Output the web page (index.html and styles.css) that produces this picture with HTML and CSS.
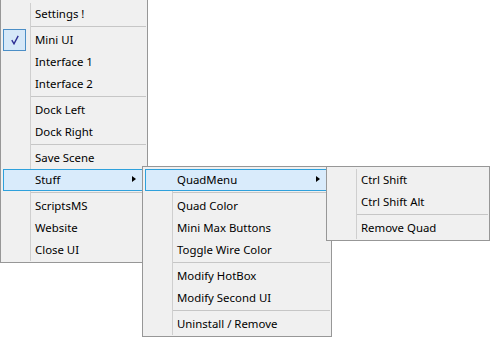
FILE: index.html
```html
<!DOCTYPE html>
<html lang="en">
<head>
    <meta charset="UTF-8">
    <title>Context Menu</title>
    <link rel="stylesheet" href="styles.css">
</head>
<body>
    <div class="menu main">
        <div class="item">Settings !</div>
        <div class="sep"></div>
        <div class="item">
            <span class="check">
                <svg width="8" height="10" viewBox="0 0 8 10"><path d="M0.8 5.2 L3 8.8 L7.2 0.8" fill="none" stroke="#2e2e94" stroke-width="1.4"/></svg>
            </span>Mini UI
        </div>
        <div class="item">Interface 1</div>
        <div class="item">Interface 2</div>
        <div class="sep"></div>
        <div class="item">Dock Left</div>
        <div class="item">Dock Right</div>
        <div class="sep"></div>
        <div class="item">Save Scene</div>
        <div class="item open">Stuff<span class="arrow"></span>
            <div class="menu sub stuff">
                <div class="item open">QuadMenu<span class="arrow"></span>
                    <div class="menu sub quad">
                        <div class="item">Ctrl Shift</div>
                        <div class="item">Ctrl Shift Alt</div>
                        <div class="sep"></div>
                        <div class="item">Remove Quad</div>
                    </div>
                </div>
                <div class="sep"></div>
                <div class="item">Quad Color</div>
                <div class="item">Mini Max Buttons</div>
                <div class="item">Toggle Wire Color</div>
                <div class="sep"></div>
                <div class="item">Modify HotBox</div>
                <div class="item">Modify Second UI</div>
                <div class="sep"></div>
                <div class="item">Uninstall / Remove</div>
            </div>
        </div>
        <div class="sep"></div>
        <div class="item">ScriptsMS</div>
        <div class="item">Website</div>
        <div class="item">Close UI</div>
    </div>
</body>
</html>
```

FILE: styles.css
```css
html, body {
    height: 100%;
}

body {
    margin: 0;
    min-height: 338px;
    background-color: #fff;
    font-family: 'Noto Sans', 'Open Sans', sans-serif;
    font-size: 11.4px;
    color: #000;
}

.menu {
    width: 148px;
    box-sizing: border-box;
    border: 1px solid #979797;
    padding: 2px 2px 1px 2px;
    background: linear-gradient(#cfcfcf, #cfcfcf) 27px 0 / 1px 100% no-repeat content-box, #f0f0f0;
}

/* the top edge of the root menu is cut off in the capture */
.menu.main {
    border-top: none;
    padding-top: 3px;
}

.menu.sub {
    position: absolute;
    top: -3px;
    left: calc(100% - 3px);
    z-index: 2;
}

.menu.stuff {
    width: 190px;
}

.menu.quad {
    width: 164px;
}

.item {
    position: relative;
    display: flex;
    align-items: center;
    height: 22px;
    box-sizing: border-box;
    padding-left: 32px;
    padding-right: 9px;
    padding-bottom: 2px;
    white-space: nowrap;
}

.item.open {
    background-color: #d9ebfb;
    box-shadow: inset 0 0 0 1px #2fa1dc;
}

.check {
    display: flex;
    align-items: center;
    justify-content: center;
    width: 23px;
    height: 22px;
    box-sizing: border-box;
    margin-left: -32px;
    margin-right: 9px;
    margin-bottom: -2px;
    background-color: #d6e8f8;
    border: 1px solid #4b8ec6;
}

.arrow {
    margin-left: auto;
    width: 0;
    height: 0;
    border-left: 4px solid #000;
    border-top: 3.5px solid transparent;
    border-bottom: 3.5px solid transparent;
}

.sep {
    height: 4px;
    box-sizing: border-box;
    margin-left: 28px;
    margin-right: -1px;
    padding-top: 1px;
}

.sep::after {
    content: '';
    display: block;
    height: 1px;
    background-color: #c6c6c6;
}
```
